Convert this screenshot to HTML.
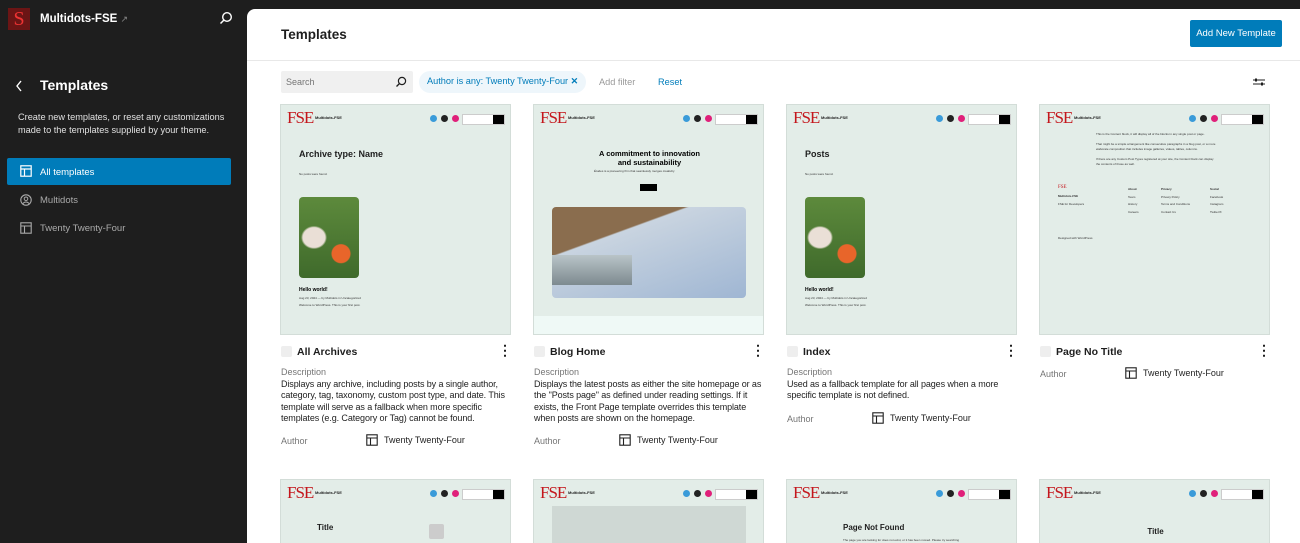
<!DOCTYPE html>
<html><head><meta charset="utf-8"><style>
*{margin:0;padding:0;box-sizing:border-box}
html,body{width:1300px;height:543px;overflow:hidden}
body{background:#1e1e1e;font-family:"Liberation Sans",sans-serif}
#w{position:relative;width:1300px;height:543px;overflow:hidden;background:#1e1e1e}
.a{position:absolute}
.side{color:#fff}
.main{left:247px;top:9px;width:1053px;height:534px;background:#fff;border-top-left-radius:8px;overflow:hidden}
.pv{width:231px;height:231px;background:#e3ede8;border:1px solid #d3ddd8;overflow:hidden}
.fse{font-family:"Liberation Serif",serif;color:#c4161c;font-size:17px;letter-spacing:-1px;left:6px;top:4px;line-height:18px}
.sn{font-size:4px;font-weight:bold;left:34px;top:10px;color:#222}
.c{width:7px;height:7px;border-radius:50%;top:10px}
.sb{left:181px;top:9px;width:43px;height:11px;border:1px solid #ccc;background:#fff}
.sb i{position:absolute;right:0;top:0;width:11px;height:9px;background:#000}
.ti{font-size:9px;color:#1e1e1e;font-weight:bold}
.tiny{font-size:3px;color:#333}
.cb{width:11px;height:11px;background:#eee;border-radius:2px}
.nm{font-size:10.5px;color:#1e1e1e;font-weight:bold}
.dots{font-size:14px;color:#1e1e1e;font-weight:bold;line-height:12px;width:4px}
.lbl{font-size:9px;color:#757575}
.desc{font-size:9px;color:#1e1e1e;line-height:11.3px;width:234px;letter-spacing:-0.1px}
.auth{font-size:9px;color:#1e1e1e;display:flex;align-items:center;gap:6px}
.dog{left:18px;top:92px;width:60px;height:81px;border-radius:4px;background:radial-gradient(circle at 70% 70%,#e8652a 0 9px,transparent 10px),radial-gradient(ellipse at 25% 50%,#eadfd6 0 11px,transparent 13px),linear-gradient(#5d8a3c,#3f6a2b)}
</style></head><body><div id="w">
<div class="a" style="left:8px;top:8px;width:22px;height:22px;background:#6b1515;color:#e33;font-family:'Liberation Serif',serif;font-size:20px;line-height:22px;text-align:center">S</div>
<div class="a side" style="left:40px;top:13px;font-size:11.5px;font-weight:bold">Multidots-FSE <span style="color:#888;font-weight:normal;font-size:9px">↗</span></div>
<svg class="a" style="left:219px;top:11px" width="14" height="14" viewBox="0 0 14 14"><circle cx="8" cy="6" r="4.3" fill="none" stroke="#fff" stroke-width="1.4"/><path d="M5 9L1.5 12.5" stroke="#fff" stroke-width="1.5"/></svg>
<svg class="a" style="left:15px;top:80px" width="8" height="12"><path d="M6 1L2 6l4 5" fill="none" stroke="#fff" stroke-width="1.4"/></svg>
<div class="a side" style="left:40px;top:77px;font-size:14px;font-weight:bold">Templates</div>
<div class="a" style="left:18px;top:111px;font-size:9.2px;line-height:13px;color:#e0e0e0;width:225px">Create new templates, or reset any customizations made to the templates supplied by your theme.</div>
<div class="a" style="left:7px;top:158px;width:224px;height:27px;background:#007cba;border-radius:2px"></div>
<svg class="a" style="left:20px;top:165px" width="12" height="12"><rect x=".8" y=".8" width="10.4" height="10.4" fill="none" stroke="#fff" stroke-width="1.2"/><path d="M1 4h10M4.5 4v7" stroke="#fff" stroke-width="1.2"/></svg>
<div class="a" style="left:40px;top:167px;font-size:9.5px;color:#fff">All templates</div>
<svg class="a" style="left:20px;top:194px" width="12" height="12"><circle cx="6" cy="6" r="5.2" fill="none" stroke="#aaa" stroke-width="1.1"/><circle cx="6" cy="4.8" r="1.8" fill="none" stroke="#aaa"/><path d="M3 9.5c1.5-2 4.5-2 6 0" fill="none" stroke="#aaa"/></svg>
<div class="a" style="left:40px;top:195px;font-size:9.5px;color:#aaa">Multidots</div>
<svg class="a" style="left:20px;top:222px" width="12" height="12"><rect x=".8" y=".8" width="10.4" height="10.4" fill="none" stroke="#aaa" stroke-width="1.1"/><path d="M1 4h10M4.5 4v7" stroke="#aaa" stroke-width="1.1"/></svg>
<div class="a" style="left:40px;top:223px;font-size:9.5px;color:#aaa">Twenty Twenty-Four</div>

<div class="a main">
<div class="a" style="left:0;top:51px;width:1053px;height:1px;background:#e8e8e8"></div>
<div class="a" style="left:34px;top:18px;font-size:13.5px;font-weight:bold;color:#1e1e1e">Templates</div>
<div class="a" style="left:943px;top:11px;width:92px;height:27px;background:#007cba;border-radius:2px;color:#fff;font-size:9.5px;line-height:27px;text-align:center;white-space:nowrap">Add New Template</div>
<div class="a" style="left:34px;top:62px;width:132px;height:22px;background:#f0f0f0;border-radius:2px"></div>
<div class="a" style="left:39px;top:68px;font-size:9px;color:#757575">Search</div>
<svg class="a" style="left:148px;top:67px" width="12" height="12"><circle cx="7" cy="5" r="3.6" fill="none" stroke="#1e1e1e" stroke-width="1.2"/><path d="M4.5 7.5L1.5 10.5" stroke="#1e1e1e" stroke-width="1.3"/></svg>
<div class="a" style="left:172px;top:62px;width:167px;height:22px;background:#eef6fb;border-radius:11px"></div>
<div class="a" style="left:180px;top:67px;font-size:9.2px;color:#007cba;white-space:nowrap">Author is any: Twenty Twenty-Four <span style="font-weight:bold">✕</span></div>
<div class="a" style="left:352px;top:68px;font-size:9.2px;color:#999">Add filter</div>
<div class="a" style="left:411px;top:68px;font-size:9.2px;color:#007cba">Reset</div>
<svg class="a" style="left:1006px;top:67px" width="12" height="12"><path d="M0 4h12M0 8h12" stroke="#1e1e1e" stroke-width="1"/><rect x="2" y="2.5" width="2" height="3" fill="#1e1e1e"/><rect x="8" y="6.5" width="2" height="3" fill="#1e1e1e"/></svg>
</div>

<div class="a pv" style="left:280px;top:104px">
<div class="a fse">FSE</div><div class="a sn">Multidots-FSE</div>
<div class="a c" style="left:149px;background:#3a9bd9"></div><div class="a c" style="left:160px;background:#222"></div><div class="a c" style="left:171px;background:#e0207a"></div><div class="a sb"><i></i></div>
<div class="a ti" style="left:18px;top:44px">Archive type: Name</div>
<div class="a tiny" style="left:18px;top:67px">No posts were found.</div>
<div class="a dog"></div>
<div class="a" style="left:18px;top:182px;font-size:5px;font-weight:bold">Hello world!</div>
<div class="a tiny" style="left:18px;top:191px">Aug 23, 2024 — by Multidots in Uncategorized</div>
<div class="a tiny" style="left:18px;top:198px">Welcome to WordPress. This is your first post.</div>
</div>
<div class="a pv" style="left:533px;top:104px">
<div class="a fse">FSE</div><div class="a sn">Multidots-FSE</div>
<div class="a c" style="left:149px;background:#3a9bd9"></div><div class="a c" style="left:160px;background:#222"></div><div class="a c" style="left:171px;background:#e0207a"></div><div class="a sb"><i></i></div>
<div class="a" style="left:0;top:44px;width:231px;text-align:center;font-size:7.5px;font-weight:bold;line-height:9px">A commitment to innovation<br>and sustainability</div>
<div class="a tiny" style="left:60px;top:64px">Études is a pioneering firm that seamlessly merges creativity</div>
<div class="a" style="left:106px;top:79px;width:17px;height:7px;background:#000"></div>
<div class="a" style="left:18px;top:102px;width:194px;height:91px;border-radius:4px;background:linear-gradient(160deg,#8a6d4e 0 30%,#c9d4e0 31%,#9fb6d3 100%)"></div>
<div class="a" style="left:18px;top:150px;width:80px;height:30px;background:linear-gradient(#b9c4c8,#7d8a8f)"></div>
<div class="a" style="left:0;top:211px;width:231px;height:20px;background:#eff9f6"></div>
</div>
<div class="a pv" style="left:786px;top:104px">
<div class="a fse">FSE</div><div class="a sn">Multidots-FSE</div>
<div class="a c" style="left:149px;background:#3a9bd9"></div><div class="a c" style="left:160px;background:#222"></div><div class="a c" style="left:171px;background:#e0207a"></div><div class="a sb"><i></i></div>
<div class="a ti" style="left:18px;top:44px">Posts</div>
<div class="a tiny" style="left:18px;top:67px">No posts were found.</div>
<div class="a dog"></div>
<div class="a" style="left:18px;top:182px;font-size:5px;font-weight:bold">Hello world!</div>
<div class="a tiny" style="left:18px;top:191px">Aug 23, 2024 — by Multidots in Uncategorized</div>
<div class="a tiny" style="left:18px;top:198px">Welcome to WordPress. This is your first post.</div>
</div>
<div class="a pv" style="left:1039px;top:104px">
<div class="a fse">FSE</div><div class="a sn">Multidots-FSE</div>
<div class="a c" style="left:149px;background:#3a9bd9"></div><div class="a c" style="left:160px;background:#222"></div><div class="a c" style="left:171px;background:#e0207a"></div><div class="a sb"><i></i></div>
<div class="a tiny" style="left:56px;top:27px;width:120px;line-height:5px">This is the Content block, it will display all of the blocks in any single post or page.<br><br>That might be a simple arrangement like consecutive paragraphs in a blog post, or a more elaborate composition that includes image galleries, videos, tables, columns.<br><br>If there are any Custom Post Types registered at your site, the Content block can display the contents of those as well.</div>
<div class="a" style="left:18px;top:80px;font-family:'Liberation Serif';color:#c4161c;font-size:5px">FSE</div>
<div class="a tiny" style="left:18px;top:89px;font-weight:bold">Multidots-FSE</div>
<div class="a tiny" style="left:18px;top:97px">FSE for Developers</div>
<div class="a tiny" style="left:88px;top:81px;line-height:7.5px"><b>About</b><br>Team<br>History<br>Careers</div>
<div class="a tiny" style="left:121px;top:81px;line-height:7.5px"><b>Privacy</b><br>Privacy Policy<br>Terms and Conditions<br>Contact Us</div>
<div class="a tiny" style="left:170px;top:81px;line-height:7.5px"><b>Social</b><br>Facebook<br>Instagram<br>Twitter/X</div>
<div class="a tiny" style="left:18px;top:131px">Designed with WordPress</div>
</div>

<div class="a cb" style="left:281px;top:346px"></div><div class="a nm" style="left:297px;top:346px">All Archives</div><div class="a dots" style="left:498px;top:344px">⋮</div>
<div class="a lbl" style="left:281px;top:367px">Description</div>
<div class="a desc" style="left:281px;top:379px">Displays any archive, including posts by a single author, category, tag, taxonomy, custom post type, and date. This template will serve as a fallback when more specific templates (e.g. Category or Tag) cannot be found.</div>
<div class="a lbl" style="left:281px;top:436px">Author</div>
<div class="a auth" style="left:366px;top:434px"><svg width="12" height="12"><rect x=".8" y=".8" width="10.4" height="10.4" fill="none" stroke="#1e1e1e" stroke-width="1.1"/><path d="M1 4h10M4.5 4v7" stroke="#1e1e1e" stroke-width="1.1"/></svg>Twenty Twenty-Four</div>

<div class="a cb" style="left:534px;top:346px"></div><div class="a nm" style="left:550px;top:346px">Blog Home</div><div class="a dots" style="left:751px;top:344px">⋮</div>
<div class="a lbl" style="left:534px;top:367px">Description</div>
<div class="a desc" style="left:534px;top:379px">Displays the latest posts as either the site homepage or as the "Posts page" as defined under reading settings. If it exists, the Front Page template overrides this template when posts are shown on the homepage.</div>
<div class="a lbl" style="left:534px;top:436px">Author</div>
<div class="a auth" style="left:619px;top:434px"><svg width="12" height="12"><rect x=".8" y=".8" width="10.4" height="10.4" fill="none" stroke="#1e1e1e" stroke-width="1.1"/><path d="M1 4h10M4.5 4v7" stroke="#1e1e1e" stroke-width="1.1"/></svg>Twenty Twenty-Four</div>

<div class="a cb" style="left:787px;top:346px"></div><div class="a nm" style="left:803px;top:346px">Index</div><div class="a dots" style="left:1004px;top:344px">⋮</div>
<div class="a lbl" style="left:787px;top:367px">Description</div>
<div class="a desc" style="left:787px;top:379px">Used as a fallback template for all pages when a more specific template is not defined.</div>
<div class="a lbl" style="left:787px;top:414px">Author</div>
<div class="a auth" style="left:872px;top:412px"><svg width="12" height="12"><rect x=".8" y=".8" width="10.4" height="10.4" fill="none" stroke="#1e1e1e" stroke-width="1.1"/><path d="M1 4h10M4.5 4v7" stroke="#1e1e1e" stroke-width="1.1"/></svg>Twenty Twenty-Four</div>

<div class="a cb" style="left:1040px;top:346px"></div><div class="a nm" style="left:1056px;top:346px">Page No Title</div><div class="a dots" style="left:1257px;top:344px">⋮</div>
<div class="a lbl" style="left:1040px;top:369px">Author</div>
<div class="a auth" style="left:1125px;top:367px"><svg width="12" height="12"><rect x=".8" y=".8" width="10.4" height="10.4" fill="none" stroke="#1e1e1e" stroke-width="1.1"/><path d="M1 4h10M4.5 4v7" stroke="#1e1e1e" stroke-width="1.1"/></svg>Twenty Twenty-Four</div>

<div class="a pv" style="left:280px;top:479px">
<div class="a fse">FSE</div><div class="a sn">Multidots-FSE</div>
<div class="a c" style="left:149px;background:#3a9bd9"></div><div class="a c" style="left:160px;background:#222"></div><div class="a c" style="left:171px;background:#e0207a"></div><div class="a sb"><i></i></div>
<div class="a ti" style="left:36px;top:43px;font-size:8px">Title</div>
<div class="a" style="left:148px;top:44px;width:15px;height:15px;background:#ccc;border-radius:2px"></div>
</div>
<div class="a pv" style="left:533px;top:479px">
<div class="a fse">FSE</div><div class="a sn">Multidots-FSE</div>
<div class="a c" style="left:149px;background:#3a9bd9"></div><div class="a c" style="left:160px;background:#222"></div><div class="a c" style="left:171px;background:#e0207a"></div><div class="a sb"><i></i></div>
<div class="a" style="left:18px;top:26px;width:194px;height:60px;background:#cfd8d4"></div>
</div>
<div class="a pv" style="left:786px;top:479px">
<div class="a fse">FSE</div><div class="a sn">Multidots-FSE</div>
<div class="a c" style="left:149px;background:#3a9bd9"></div><div class="a c" style="left:160px;background:#222"></div><div class="a c" style="left:171px;background:#e0207a"></div><div class="a sb"><i></i></div>
<div class="a ti" style="left:56px;top:43px;font-size:8px">Page Not Found</div>
<div class="a tiny" style="left:56px;top:58px">The page you are looking for does not exist, or it has been moved. Please try searching</div>
</div>
<div class="a pv" style="left:1039px;top:479px">
<div class="a fse">FSE</div><div class="a sn">Multidots-FSE</div>
<div class="a c" style="left:149px;background:#3a9bd9"></div><div class="a c" style="left:160px;background:#222"></div><div class="a c" style="left:171px;background:#e0207a"></div><div class="a sb"><i></i></div>
<div class="a ti" style="left:0;top:47px;width:231px;text-align:center;font-size:8px">Title</div>
</div>
</div></body></html>
